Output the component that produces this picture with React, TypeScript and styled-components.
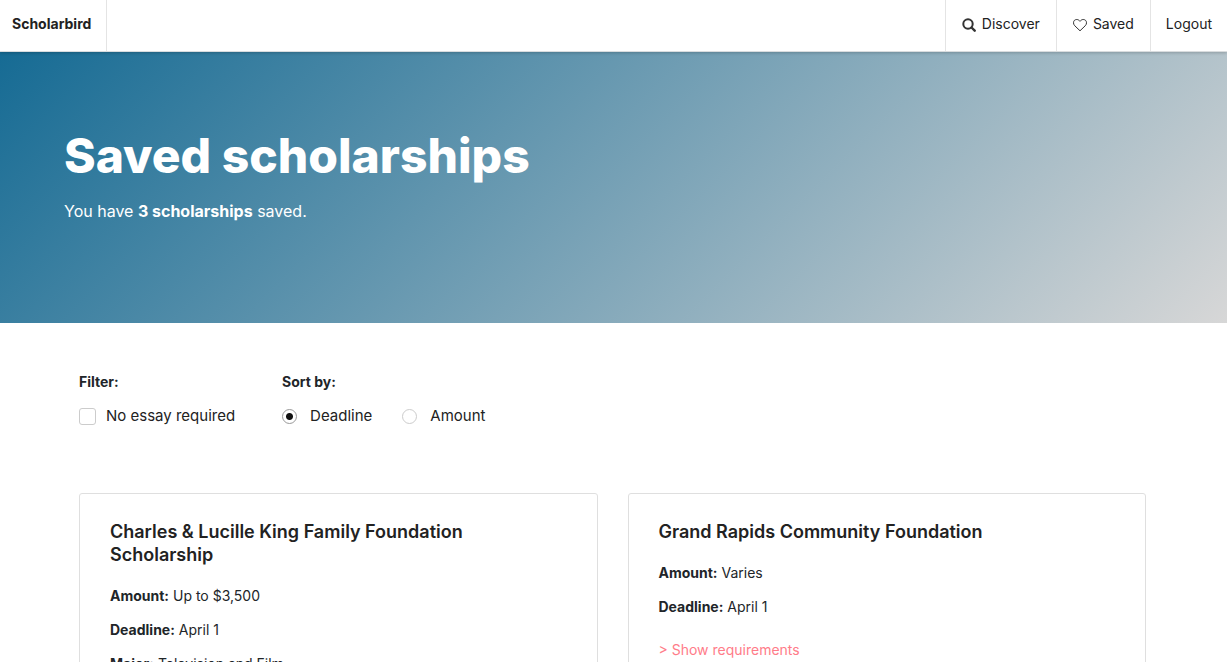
import React, { useState } from "react";
import styled, { createGlobalStyle } from "styled-components";

const GlobalStyle = createGlobalStyle`
  *, *::before, *::after { box-sizing: border-box; }
  body {
    margin: 0;
    background: #fff;
    color: #212529;
    font-family: Inter, "Liberation Sans", sans-serif;
    font-size: 14px;
    line-height: 24px;
  }
  h1, h2, p, fieldset { margin: 0; }
`;

const Header = styled.header`
  position: relative;
  display: flex;
  justify-content: space-between;
  height: 52px;
  background: #fff;
  border-bottom: 1px solid #d9dcde;
  box-shadow: 0 1px 3px rgba(0, 0, 0, 0.2);
`;

const Brand = styled.a`
  display: flex;
  align-items: center;
  padding: 0 15px 3px 12px;
  border-right: 1px solid #e4e4e4;
  color: #222;
  font-weight: 700;
  text-decoration: none;
`;

const Nav = styled.nav`
  display: flex;
`;

const NavLink = styled.a`
  display: flex;
  align-items: center;
  gap: 6px;
  padding: 0 16px 3px;
  border-left: 1px solid #e4e4e4;
  color: #222;
  text-decoration: none;
  &:last-child { padding-left: 15px; padding-right: 15px; }
`;

const Icon = styled.svg`
  display: block;
  width: 14px;
  height: 14px;
  margin-top: 2px;
`;

const Hero = styled.section`
  padding: 73px 64px 100px;
  background: linear-gradient(135deg, #166b94, #d7d7d7);
  color: #fff;
  font-size: 16px;
`;

const Title = styled.h1`
  margin-bottom: 12px;
  font-size: 48px;
  font-weight: 800;
  line-height: 62px;
`;

const Content = styled.main`
  padding: 47px 81px 48px 79px;
`;

const Controls = styled.form`
  display: flex;
  gap: 47px;
  margin-bottom: 65px;
`;

const Group = styled.fieldset`
  min-width: 0;
  padding: 0;
  border: 0;
`;

const Legend = styled.legend`
  margin-bottom: 10px;
  padding: 0;
  font-weight: 700;
`;

const Options = styled.div`
  display: flex;
  gap: 30px;
`;

const Option = styled.label<{ $gap: number }>`
  display: flex;
  align-items: center;
  gap: ${(p) => p.$gap}px;
  color: #222;
  font-size: 15px;
`;

const Checkbox = styled.input`
  appearance: none;
  width: 17px;
  height: 17px;
  margin: 1px 0 0;
  border: 1px solid #ccc;
  border-radius: 3px;
  background: #fff;
  &:checked { background: #111; box-shadow: inset 0 0 0 3px #fff; }
`;

const Radio = styled.input`
  appearance: none;
  width: 15px;
  height: 15px;
  margin: 1px 0 0;
  border: 1px solid #ccc;
  border-radius: 50%;
  background: #fff;
  &:checked {
    border-color: #999;
    background: radial-gradient(circle, #111 3px, #fff 4px);
  }
`;

const Cards = styled.div`
  display: grid;
  grid-template-columns: 1fr 1fr;
  gap: 30px;
`;

const Card = styled.article`
  padding: 26px 30px 30px;
  border: 1px solid #dfdfdf;
  border-radius: 3px;
`;

const CardTitle = styled.h2`
  margin-bottom: 18px;
  color: #222;
  font-size: 18px;
  font-weight: 600;
  line-height: 23px;
`;

const Detail = styled.p`
  padding: 0 0 10px;
`;

const Details = styled.div`
  display: flex;
  flex-direction: column;
`;

const Toggle = styled.button`
  margin-top: 9px;
  padding: 0;
  border: 0;
  background: none;
  color: #ff7c89;
  font: inherit;
  cursor: pointer;
`;

interface Scholarship {
  name: string;
  amount: string;
  deadline: string;
  major?: string;
}

const scholarships: Scholarship[] = [
  {
    name: "Charles & Lucille King Family Foundation Scholarship",
    amount: "Up to $3,500",
    deadline: "April 1",
    major: "Television and Film",
  },
  { name: "Grand Rapids Community Foundation", amount: "Varies", deadline: "April 1" },
];

export default function App() {
  const [sort, setSort] = useState("deadline");
  return (
    <>
      <GlobalStyle />
      <Header>
        <Brand href="#">Scholarbird</Brand>
        <Nav>
          <NavLink href="#discover">
            <Icon viewBox="0 0 14 14" fill="none" stroke="#333" aria-hidden="true">
              <circle cx="6" cy="6" r="4.7" strokeWidth="2" />
              <path d="M9.5 9.5l3.2 3.2" strokeWidth="2.4" strokeLinecap="round" />
            </Icon>
            Discover
          </NavLink>
          <NavLink href="#saved">
            <Icon viewBox="0 0 14 14" fill="none" stroke="#333" strokeLinejoin="round" aria-hidden="true">
              <path d="M7 12.800L1.800 7.800C.9 6.800.5 5.900.5 4.800.5 2.800 1.800 1.500 3.800 1.500 5.200 1.500 6.300 2.400 7 3.300 7.700 2.400 8.800 1.500 10.200 1.500 12.200 1.500 13.500 2.800 13.500 4.800 13.500 5.900 13.100 6.800 12.200 7.800Z" />
            </Icon>
            Saved
          </NavLink>
          <NavLink href="#logout">Logout</NavLink>
        </Nav>
      </Header>
      <Hero>
        <Title>Saved scholarships</Title>
        <p>
          You have <strong>3 scholarships</strong> saved.
        </p>
      </Hero>
      <Content>
        <Controls>
          <Group>
            <Legend>Filter:</Legend>
            <Option $gap={10}>
              <Checkbox type="checkbox" />
              No essay required
            </Option>
          </Group>
          <Group>
            <Legend>Sort by:</Legend>
            <Options>
              <Option $gap={13}>
                <Radio type="radio" name="sort" checked={sort === "deadline"} onChange={() => setSort("deadline")} />
                Deadline
              </Option>
              <Option $gap={13}>
                <Radio type="radio" name="sort" checked={sort === "amount"} onChange={() => setSort("amount")} />
                Amount
              </Option>
            </Options>
          </Group>
        </Controls>
        <Cards>
          {scholarships.map((s) => (
            <Card key={s.name}>
              <CardTitle>{s.name}</CardTitle>
              <Details>
                <Detail><strong>Amount:</strong> {s.amount}</Detail>
                <Detail><strong>Deadline:</strong> {s.deadline}</Detail>
                {s.major && <Detail><strong>Major:</strong> {s.major}</Detail>}
              </Details>
              <Toggle type="button">&gt; Show requirements</Toggle>
            </Card>
          ))}
        </Cards>
      </Content>
    </>
  );
}
